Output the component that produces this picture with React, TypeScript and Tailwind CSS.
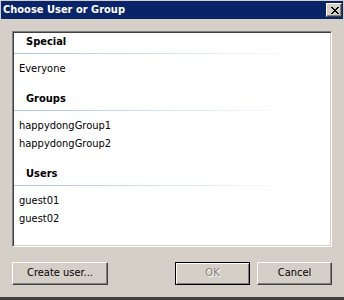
import React from "react";

const sections = [
  { title: "Special", items: ["Everyone"] },
  { title: "Groups", items: ["happydongGroup1", "happydongGroup2"] },
  { title: "Users", items: ["guest01", "guest02"] },
];

function CloseGlyph() {
  const px: [number, number, number][] = [
    [0, 0, 2], [6, 0, 2],
    [1, 1, 2], [5, 1, 2],
    [2, 2, 4],
    [3, 3, 2],
    [2, 4, 4],
    [1, 5, 2], [5, 5, 2],
    [0, 6, 2], [6, 6, 2],
  ];
  return (
    <svg width="8" height="7" viewBox="0 0 8 7" shapeRendering="crispEdges">
      {px.map(([x, y, w], i) => (
        <rect key={i} x={x} y={y} width={w} height={1} fill="#000" />
      ))}
    </svg>
  );
}

export default function App() {
  return (
    <div className="w-[344px] h-[300px] bg-[#d4d0c8] flex flex-col pt-[1px] px-[1px] border-b-[3px] border-b-[#404040] font-['DejaVu_Sans_Condensed','DejaVu_Sans',sans-serif] text-[11px] text-black">
      {/* Title bar */}
      <div className="h-[18px] bg-[#0a246a] flex items-center justify-between pl-[2px] pr-[1px]">
        <div className="self-start pt-[2px] leading-[13px] font-bold text-white">Choose User or Group</div>
        <div className="w-[16px] h-[14px] bg-[#d4d0c8] border border-t-white border-l-white border-r-[#404040] border-b-[#404040] shadow-[inset_-1px_-1px_0_#808080] flex items-center justify-center pl-[1px]">
          <CloseGlyph />
        </div>
      </div>

      {/* List box */}
      <div className="ml-[11px] mt-[12px] w-[320px] h-[216px] bg-white border border-t-[#808080] border-l-[#808080] border-r-white border-b-white shadow-[inset_1px_1px_0_#404040,inset_-1px_-1px_0_#d4d0c8] p-[1px] flex flex-col">
        {sections.map((s) => (
          <div key={s.title} className="flex flex-col pb-[12px]">
            <div className="h-[20px] pt-[2px] pl-[12px] leading-[13px] font-bold">{s.title}</div>
            <div className="h-px w-[284px] bg-linear-to-r from-[#a9c3ee] via-[#d3e0f6] to-white" />
            <div className="pt-[6px] flex flex-col">
              {s.items.map((it) => (
                <div key={it} className="h-[18px] leading-[18px] pl-[5px]">{it}</div>
              ))}
            </div>
          </div>
        ))}
      </div>

      {/* Buttons */}
      <div className="mt-[15px] ml-[11px] w-[320px] flex items-center">
        <div className="w-[96px] h-[23px] border border-t-white border-l-white border-r-[#404040] border-b-[#404040] shadow-[inset_-1px_-1px_0_#808080] flex items-center justify-center">
          Create user...
        </div>
        <div className="ml-auto w-[75px] h-[23px] border border-black shadow-[inset_1px_1px_0_#fff,inset_-1px_-1px_0_#808080] flex items-center justify-center text-[#808080] [text-shadow:1px_1px_0_#fff]">
          OK
        </div>
        <div className="ml-[7px] w-[75px] h-[23px] border border-t-white border-l-white border-r-[#404040] border-b-[#404040] shadow-[inset_-1px_-1px_0_#808080] flex items-center justify-center">
          Cancel
        </div>
      </div>
    </div>
  );
}
